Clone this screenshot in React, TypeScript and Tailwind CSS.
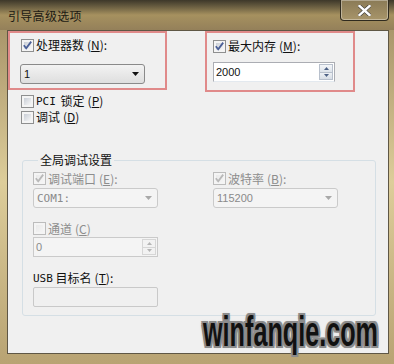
import React from "react";

const cjk = "font-['Noto_Sans_CJK_SC','Noto_Sans',sans-serif]";
const mono = "font-['DejaVu_Sans_Mono','Liberation_Mono',monospace]";
const sans = "font-['Liberation_Sans',Arial,sans-serif]";

function Check({ checked, disabled }: { checked?: boolean; disabled?: boolean }) {
  return (
    <span
      className={`relative flex h-[13px] w-[13px] shrink-0 border p-[2px] ${
        disabled ? "border-[#bcbcbc] bg-[#f4f4f4]" : "border-[#8e8f8f] bg-[#f4f4f4]"
      }`}
    >
      <span
        className={`flex-1 bg-gradient-to-br ${
          disabled ? "from-[#eaeaea] to-[#f4f4f4]" : "from-[#c9ced6] to-[#f7f7f7]"
        }`}
      />
      {checked && (
        <svg className="absolute inset-0" width="11" height="11" viewBox="0 0 11 11">
          <path
            d="M1.8 5.2 L4.2 8.2 L9.2 1.6"
            fill="none"
            stroke={disabled ? "#b8b8b8" : "#4a5f97"}
            strokeWidth="1.8"
          />
        </svg>
      )}
    </span>
  );
}

function Label({ children, disabled }: { children: React.ReactNode; disabled?: boolean }) {
  return (
    <span
      className={`${cjk} text-[12px] leading-[14px] ${disabled ? "text-[#8d8d8d]" : "text-[#111]"}`}
    >
      {children}
    </span>
  );
}

function Key({ k }: { k: string }) {
  return (
    <span className="ml-[3px]">
      (<u>{k}</u>)
    </span>
  );
}

function Arrow({ color }: { color: string }) {
  return (
    <svg width="7" height="4" viewBox="0 0 7 4">
      <path d="M0 0 H7 L3.5 4 Z" fill={color} />
    </svg>
  );
}

function Combo({ value, disabled, monoText }: { value: string; disabled?: boolean; monoText?: boolean }) {
  return (
    <div
      className={`flex h-[20px] w-[125px] items-center justify-between rounded-[3px] border pl-[3px] pr-[5px] ${
        disabled
          ? "border-[#cacaca] bg-[#f4f4f4] text-[#8a8a8a]"
          : "border-[#8a8a8a] bg-gradient-to-b from-[#f3f3f3] to-[#dedede] text-[#111]"
      }`}
    >
      <span className={`${monoText ? mono : sans} text-[11px] leading-none`}>{value}</span>
      <Arrow color={disabled ? "#a8a8a8" : "#111"} />
    </div>
  );
}

function Spin({ value, disabled, width }: { value: string; disabled?: boolean; width: string }) {
  const arrow = disabled ? "#b4b4b4" : "#4d6185";
  return (
    <div
      className={`flex h-[20px] items-stretch border p-[1px] ${width} ${
        disabled ? "border-[#cacaca] bg-[#f4f4f4]" : "border-[#abadb3] border-b-[#e3e9ef] bg-white"
      }`}
    >
      <span
        className={`${sans} flex flex-1 items-center pl-[1px] text-[11px] ${
          disabled ? "text-[#8a8a8a]" : "text-[#111]"
        }`}
      >
        {value}
      </span>
      <div className="flex w-[14px] flex-col">
        <div
          className={`flex flex-1 items-center justify-center border ${
            disabled ? "border-[#d6d6d6] bg-[#f2f2f2]" : "border-[#b8c0cc] bg-gradient-to-b from-[#f4f6f9] to-[#dde3ea]"
          }`}
        >
          <svg width="5" height="3" viewBox="0 0 5 3">
            <path d="M0 3 H5 L2.5 0 Z" fill={arrow} />
          </svg>
        </div>
        <div
          className={`flex flex-1 items-center justify-center border border-t-0 ${
            disabled ? "border-[#d6d6d6] bg-[#f2f2f2]" : "border-[#b8c0cc] bg-gradient-to-b from-[#eef1f5] to-[#d7dde5]"
          }`}
        >
          <svg width="5" height="3" viewBox="0 0 5 3">
            <path d="M0 0 H5 L2.5 3 Z" fill={arrow} />
          </svg>
        </div>
      </div>
    </div>
  );
}

export default function App() {
  return (
    <div className="relative flex h-[364px] w-[394px] flex-col overflow-hidden bg-gradient-to-b from-[#a08c62] via-[#ddcd9a] to-[#b8a373]">
      {/* title bar */}
      <div className="flex h-[30px] shrink-0 items-start justify-between bg-gradient-to-b from-[#3d382a] via-[#a6915f] to-[#94805a]">
        <span className={`${cjk} pl-[8px] pt-[8px] text-[12px] leading-[16px] tracking-[0.3px] text-[#1c1a14]`}>
          引导高级选项
        </span>
        <div className="mr-[5px] flex h-[21px] w-[49px] items-center justify-center rounded-b-[4px] border border-t-0 border-[#2f2a1e] bg-gradient-to-b from-[#8a7a56] to-[#a8956a] shadow-[inset_0_0_0_1px_rgba(255,255,255,0.35)]">
          <svg width="13" height="11" viewBox="0 0 13 11">
            <path d="M1.5 1 L11.5 10 M11.5 1 L1.5 10" stroke="#333" strokeWidth="3.6" strokeLinecap="square" />
            <path d="M1.5 1 L11.5 10 M11.5 1 L1.5 10" stroke="#fff" strokeWidth="2.4" strokeLinecap="square" />
          </svg>
        </div>
      </div>

      {/* client area */}
      <div className="mb-[10px] ml-[7px] mr-[5px] flex flex-1 flex-col border border-[#5f5745] bg-[#f0f0f0]">
        <div className="flex items-start">
          <div className="flex h-[59px] w-[159px] flex-col border-2 border-[#e08a8a] pl-[11px] pt-[5px]">
            <div className="flex items-center gap-[2px]">
              <Check checked />
              <Label>
                处理器数<Key k="N" />:
              </Label>
            </div>
            <div className="ml-[-1px] mt-[12px]">
              <Combo value="1" />
            </div>
          </div>
          <div className="ml-[38px] flex h-[61px] w-[150px] flex-col border-2 border-[#e08a8a] pl-[6px] pt-[6px]">
            <div className="flex items-center gap-[2px]">
              <Check checked />
              <Label>
                最大内存<Key k="M" />:
              </Label>
            </div>
            <div className="mt-[9px]">
              <Spin value="2000" width="w-[122px]" />
            </div>
          </div>
        </div>

        <div className="ml-[13px] mt-[1px] flex h-[16px] items-center gap-[2px]">
          <Check />
          <span className={`${mono} text-[11px] leading-none text-[#111]`}>PCI</span>
          <Label>
            &nbsp;锁定<Key k="P" />
          </Label>
        </div>
        <div className="ml-[13px] flex h-[16px] items-center gap-[2px]">
          <Check />
          <Label>
            调试<Key k="D" />
          </Label>
        </div>

        <fieldset className="ml-[14px] mt-[28px] h-[163px] w-[354px] rounded-[3px] border border-[#d5dfe5] px-[10px] pb-[7px]">
          <legend className={`${cjk} ml-[5px] px-[2px] text-[12px] leading-[14px] text-[#111]`}>全局调试设置</legend>
          <div className="mt-[5px] flex">
            <div className="flex w-[180px] flex-col">
              <div className="flex h-[13px] items-center gap-[2px]">
                <Check checked disabled />
                <Label disabled>
                  调试端口<Key k="E" />:
                </Label>
              </div>
              <div className="mt-[3px]">
                <Combo value="COM1:" disabled monoText />
              </div>
            </div>
            <div className="flex flex-col">
              <div className="flex h-[13px] items-center gap-[2px]">
                <Check checked disabled />
                <Label disabled>
                  波特率<Key k="B" />:
                </Label>
              </div>
              <div className="mt-[3px]">
                <Combo value="115200" disabled />
              </div>
            </div>
          </div>

          <div className="mt-[14px] flex h-[13px] items-center gap-[2px]">
            <Check disabled />
            <Label disabled>
              通道<Key k="C" />
            </Label>
          </div>
          <div className="mt-[2px]">
            <Spin value="0" disabled width="w-[125px]" />
          </div>

          <div className="mt-[13px] flex h-[16px] items-center">
            <span className={`${mono} text-[11px] leading-none text-[#111]`}>USB</span>
            <Label>
              &nbsp;目标名<Key k="T" />:
            </Label>
          </div>
          <div className="mt-[1px] h-[20px] w-[125px] rounded-[2px] border border-[#c9c9c9] bg-[#f0f0f0]" />
        </fieldset>
      </div>

      {/* watermark */}
      <span
        className={`${sans} absolute left-[203px] top-[311px] origin-left scale-x-[0.6] text-[42px] font-bold leading-none text-[#111] [text-shadow:3px_0_0_#8c8c8c,-3px_0_0_#8c8c8c,0_2px_0_#8c8c8c,0_-2px_0_#8c8c8c,3px_2px_0_#8c8c8c,-3px_-2px_0_#8c8c8c,3px_-2px_0_#8c8c8c,-3px_2px_0_#8c8c8c,0_0_5px_#9a9a9a]`}
      >
        winfanqie.com
      </span>
    </div>
  );
}
